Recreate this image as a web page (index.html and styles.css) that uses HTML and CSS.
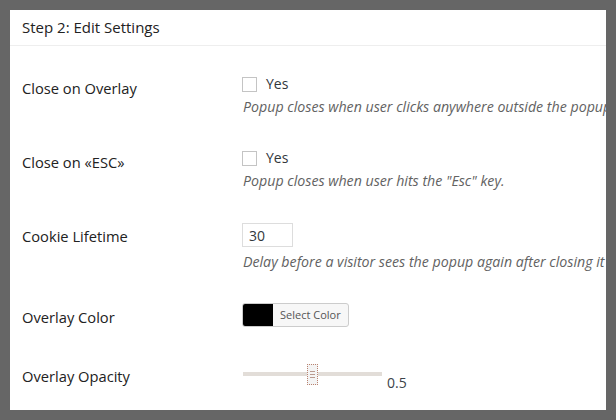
FILE: index.html
```html
<!DOCTYPE html>
<html>
<head>
<meta charset="utf-8">
<link rel="stylesheet" href="styles.css">
</head>
<body>
<div class="panel">
  <div class="panel-head">Step 2: Edit Settings</div>
  <div class="settings">
    <div class="row">
      <div class="label">Close on Overlay</div>
      <div class="field">
        <div class="check"><span class="box"></span><span>Yes</span></div>
        <p class="desc">Popup closes when user clicks anywhere outside the popup</p>
      </div>
    </div>
    <div class="row">
      <div class="label">Close on «ESC»</div>
      <div class="field">
        <div class="check"><span class="box"></span><span>Yes</span></div>
        <p class="desc">Popup closes when user hits the "Esc" key.</p>
      </div>
    </div>
    <div class="row row-input">
      <div class="label">Cookie Lifetime</div>
      <div class="field">
        <div class="input-line"><input class="num" type="text" value="30"></div>
        <p class="desc">Delay before a visitor sees the popup again after closing it</p>
      </div>
    </div>
    <div class="row row-color">
      <div class="label">Overlay Color</div>
      <div class="field">
        <div class="color-btn"><span class="swatch"></span><span class="color-text">Select Color</span></div>
      </div>
    </div>
    <div class="row">
      <div class="label">Overlay Opacity</div>
      <div class="field">
        <div class="slider-line">
          <div class="slider">
            <div class="track"></div>
            <div class="handle"><span></span><span></span><span></span></div>
          </div>
          <span class="value">0.5</span>
        </div>
      </div>
    </div>
  </div>
</div>
</body>
</html>
```

FILE: styles.css
```css
html, body {
  margin: 0;
  padding: 0;
  background: #666666;
}
body {
  padding: 10px;
  font-family: "Open Sans", "Liberation Sans", sans-serif;
  color: #222222;
}
.panel {
  width: 596px;
  height: 400px;
  background: #fff;
  overflow: hidden;
}
.panel-head {
  height: 35px;
  line-height: 35px;
  padding-left: 12px;
  font-size: 15px;
  border-bottom: 1px solid #eeeeee;
  white-space: nowrap;
}
.settings {
  margin-top: 13px;
}
.row {
  display: grid;
  grid-template-columns: 221px 1fr;
  padding-left: 12px;
}
.label {
  padding-top: 20px;
  font-size: 14.7px;
  line-height: 18px;
  white-space: nowrap;
}
.field {
  padding: 15px 0 16px 0;
  min-width: 0;
  white-space: nowrap;
  line-height: 18px;
  font-size: 14px;
}
.check {
  display: flex;
  align-items: center;
  height: 20px;
  font-size: 14px;
  color: #32373c;
}
.box {
  width: 13px;
  height: 13px;
  border: 1px solid #c4c4c4;
  background: #fff;
  margin-left: -1px;
  margin-right: 9px;
}
.desc {
  margin: 3px 0 0 0;
  font-size: 14.2px;
  line-height: 20px;
  font-style: italic;
  color: #626262;
}
.input-line {
  height: 26px;
}
.num {
  display: block;
  margin: 1px 0 0 -1px;
  box-sizing: border-box;
  width: 51px;
  height: 24px;
  padding: 0 6px;
  border: 1px solid #dddddd;
  font-family: "Open Sans", "Liberation Sans", sans-serif;
  font-size: 14px;
  color: #32373c;
  outline: none;
}
.row-color .field {
  padding-bottom: 20px;
}
.color-btn {
  display: flex;
  width: fit-content;
  box-sizing: border-box;
  height: 24px;
  margin-left: -1px;
  border: 1px solid #cccccc;
  border-radius: 3px;
  background: #f7f7f7;
  overflow: hidden;
}
.swatch {
  width: 30px;
  background: #000;
}
.color-text {
  padding: 0 7px 0 7px;
  font-size: 11px;
  line-height: 22px;
  color: #555555;
}
.slider-line {
  display: flex;
  align-items: flex-start;
}
.slider {
  position: relative;
  width: 139px;
  height: 21px;
  margin-top: 2px;
}
.track {
  position: absolute;
  left: 0;
  right: 0;
  top: 8px;
  height: 4px;
  background: #e2ddd8;
}
.handle {
  position: absolute;
  left: 64px;
  top: 0;
  box-sizing: border-box;
  width: 11px;
  height: 21px;
  border: 1px dotted #b9826f;
  background: #f4f4f4;
  display: flex;
  flex-direction: column;
  justify-content: center;
  align-items: center;
  gap: 2px;
}
.handle span {
  display: block;
  width: 5px;
  height: 1px;
  background: #b99a90;
}
.value {
  margin-left: 5px;
  margin-top: 12px;
  font-size: 14px;
  line-height: 18px;
  color: #3c434a;
}
```
